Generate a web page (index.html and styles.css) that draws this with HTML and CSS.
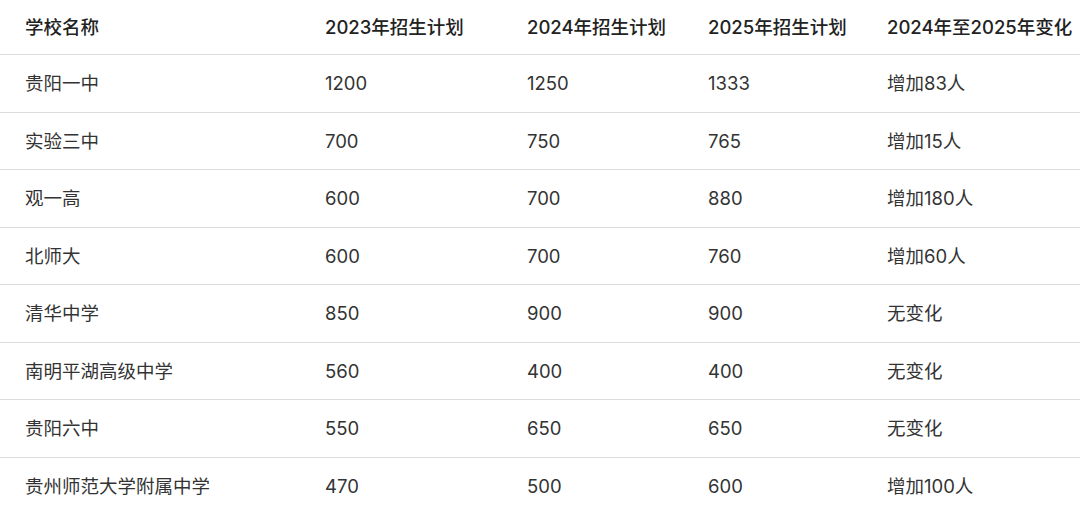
FILE: index.html
```html
<!DOCTYPE html>
<html lang="zh-CN">
<head>
<meta charset="utf-8">
<link rel="stylesheet" href="styles.css">
</head>
<body>
<div class="table">
  <div class="row head">
    <div class="c c1">学校名称</div><div class="c c2">2023年招生计划</div><div class="c c3">2024年招生计划</div><div class="c c4">2025年招生计划</div><div class="c c5">2024年至2025年变化</div>
  </div>
  <div class="row">
    <div class="c c1">贵阳一中</div><div class="c c2">1200</div><div class="c c3">1250</div><div class="c c4">1333</div><div class="c c5">增加83人</div>
  </div>
  <div class="row">
    <div class="c c1">实验三中</div><div class="c c2">700</div><div class="c c3">750</div><div class="c c4">765</div><div class="c c5">增加15人</div>
  </div>
  <div class="row">
    <div class="c c1">观一高</div><div class="c c2">600</div><div class="c c3">700</div><div class="c c4">880</div><div class="c c5">增加180人</div>
  </div>
  <div class="row">
    <div class="c c1">北师大</div><div class="c c2">600</div><div class="c c3">700</div><div class="c c4">760</div><div class="c c5">增加60人</div>
  </div>
  <div class="row">
    <div class="c c1">清华中学</div><div class="c c2">850</div><div class="c c3">900</div><div class="c c4">900</div><div class="c c5">无变化</div>
  </div>
  <div class="row">
    <div class="c c1">南明平湖高级中学</div><div class="c c2">560</div><div class="c c3">400</div><div class="c c4">400</div><div class="c c5">无变化</div>
  </div>
  <div class="row">
    <div class="c c1">贵阳六中</div><div class="c c2">550</div><div class="c c3">650</div><div class="c c4">650</div><div class="c c5">无变化</div>
  </div>
  <div class="row last">
    <div class="c c1">贵州师范大学附属中学</div><div class="c c2">470</div><div class="c c3">500</div><div class="c c4">600</div><div class="c c5">增加100人</div>
  </div>
</div>
</body>
</html>
```
FILE: styles.css
```css
html, body {
  margin: 0;
  padding: 0;
  background: #ffffff;
}
body {
  width: 1080px;
  height: 506px;
  overflow: hidden;
  font-family: "Inter", "Noto Sans CJK SC", sans-serif;
  font-size: 18.5px;
  color: #333333;
}
.table {
  display: flex;
  flex-direction: column;
}
.row {
  display: grid;
  grid-template-columns: 325px 202px 181px 179px 1fr;
  align-items: center;
  height: 56.5px;
  border-bottom: 1px solid #dcdcdc;
  box-sizing: content-box;
}
.row.head {
  height: 54px;
  color: #222222;
  font-weight: 500;
}
.row.last {
  border-bottom: none;
}
.c {
  white-space: nowrap;
  line-height: 24px;
}
.c1 {
  padding-left: 25px;
}
```
